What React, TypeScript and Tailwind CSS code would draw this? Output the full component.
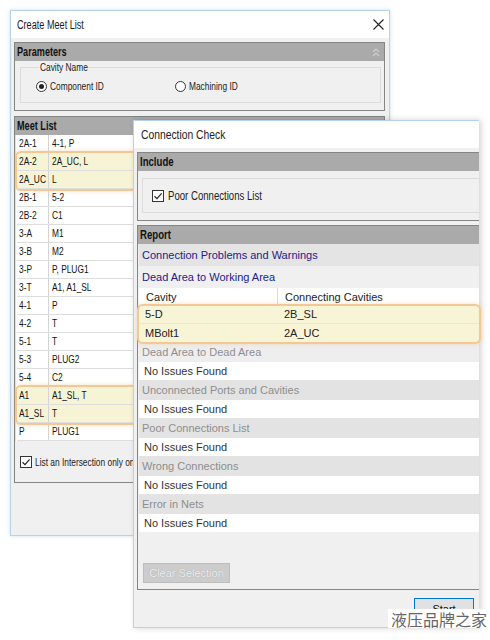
import React from 'react';

const sans = "font-['Liberation_Sans',Arial,sans-serif]";

// the screenshot is squeezed sideways; window 1 more than window 2
const Sq = ({ children, k = 'w1' }: { children: React.ReactNode; k?: 'w1' | 'w2' | 'hd' }) => (
    <span
        className={`inline-block origin-left whitespace-nowrap ${
            k === 'w1' ? 'scale-x-[0.76]' : k === 'w2' ? 'scale-x-[0.86]' : 'scale-x-[0.8]'
        }`}
    >
        {children}
    </span>
);

type MeetGroup = { hl: boolean; rows: [string, string][] };

const meetGroups: MeetGroup[] = [
    { hl: false, rows: [['2A-1', '4-1, P']] },
    { hl: true, rows: [['2A-2', '2A_UC, L'], ['2A_UC', 'L']] },
    {
        hl: false,
        rows: [
            ['2B-1', '5-2'], ['2B-2', 'C1'], ['3-A', 'M1'], ['3-B', 'M2'], ['3-P', 'P, PLUG1'],
            ['3-T', 'A1, A1_SL'], ['4-1', 'P'], ['4-2', 'T'], ['5-1', 'T'], ['5-3', 'PLUG2'], ['5-4', 'C2'],
        ],
    },
    { hl: true, rows: [['A1', 'A1_SL, T'], ['A1_SL', 'T']] },
    { hl: false, rows: [['P', 'PLUG1']] },
];

const sections = [
    { title: 'Dead Area to Dead Area', light: true },
    { title: 'Unconnected Ports and Cavities', light: false },
    { title: 'Poor Connections List', light: false },
    { title: 'Wrong Connections', light: false },
    { title: 'Error in Nets', light: false },
];

const Radio = ({ checked }: { checked?: boolean }) => (
    <span className="w-[11px] h-[11px] rounded-full border border-[#333] bg-white flex items-center justify-center shrink-0">
        {checked && <span className="w-[5px] h-[5px] rounded-full bg-[#222]" />}
    </span>
);

const Check = () => (
    <span className="w-[12px] h-[12px] border border-[#333] bg-white flex items-center justify-center shrink-0">
        <svg width="10" height="10" viewBox="0 0 10 10">
            <path d="M1.5 5.2 L4 7.6 L8.6 2.4" fill="none" stroke="#222" strokeWidth="1.2" />
        </svg>
    </span>
);

const PanelHeader = ({ title, k, collapse }: { title: string; k: 'w1' | 'hd'; collapse?: boolean }) => (
    <div className="h-[18px] bg-[#aaaaaa] flex items-center justify-between pl-[2px] pr-[4px]">
        <span className={`${sans} text-[12px] font-bold text-[#111]`}>
            <Sq k={k}>{title}</Sq>
        </span>
        {collapse && (
            <svg width="8" height="9" viewBox="0 0 8 9">
                <path d="M1 4 L4 1 L7 4 M1 8 L4 5 L7 8" fill="none" stroke="#cfcfcf" strokeWidth="1.2" />
            </svg>
        )}
    </div>
);

const CreateMeetList = () => (
    <div className="absolute z-[1] left-[10px] top-[10px] w-[380px] h-[526px] border border-[#b8d2ee] bg-[#f0f0f0] flex flex-col shadow-[0_0_4px_rgba(120,160,210,0.35)]">
        <div className="h-[27px] bg-white flex items-center justify-between pl-[6px] pr-[5px]">
            <span className={`${sans} text-[12px] text-[#1a1a1a]`}>
                <Sq>Create Meet List</Sq>
            </span>
            <svg width="11" height="11" viewBox="0 0 11 11">
                <path d="M0.5 0.5 L10.5 10.5 M10.5 0.5 L0.5 10.5" stroke="#222" strokeWidth="1.1" />
            </svg>
        </div>
        <div className="flex flex-col pl-[3px] pr-[4px] pt-[4px]">
            {/* Parameters */}
            <div className="h-[69px] border border-[#858585] flex flex-col">
                <PanelHeader title="Parameters" k="w1" collapse />
                <div className="pl-[5px] pr-[3px]">
                    <fieldset className="h-[42px] border border-[#dcdcdc] px-[15px]">
                        <legend className={`${sans} text-[11px] leading-[12px] text-[#222] ml-[3px] px-[1px] w-[38px] overflow-visible`}>
                            <Sq>Cavity Name</Sq>
                        </legend>
                        <div className={`${sans} text-[11px] text-[#222] flex items-center h-[14px] mt-[6px]`}>
                            <span className="w-[139px] flex items-center gap-[3px]">
                                <Radio checked /> <Sq>Component ID</Sq>
                            </span>
                            <span className="flex items-center gap-[3px]">
                                <Radio /> <Sq>Machining ID</Sq>
                            </span>
                        </div>
                    </fieldset>
                </div>
            </div>

            {/* Meet List */}
            <div className="mt-[5px] h-[367px] border border-[#858585] flex flex-col">
                <PanelHeader title="Meet List" k="w1" />
                <div className="pl-[1px] bg-white border-l border-[#e0e0e0]">
                    {meetGroups.map((g, gi) => (
                        <div
                            key={gi}
                            className={g.hl ? 'relative z-[1] rounded-[4px] bg-[#f6f4d4] ring-2 ring-[#f2c896] shadow-[0_0_4px_2px_rgba(240,190,130,0.5)]' : ''}
                        >
                            {g.rows.map(([a, b]) => (
                                <div key={a} className={`${sans} text-[11px] text-[#111] h-[18px] flex items-center border-b border-[#dedede]`}>
                                    <span className="w-[32px] h-full flex items-center pl-[2px] border-r border-[#d4d4d4]">
                                        <Sq>{a}</Sq>
                                    </span>
                                    <span className="pl-[3px]">
                                        <Sq>{b}</Sq>
                                    </span>
                                </div>
                            ))}
                        </div>
                    ))}
                </div>
                <div className={`${sans} text-[11px] text-[#222] flex items-center gap-[3px] pl-[5px] mt-[14px] h-[14px]`}>
                    <Check /> <Sq>List an Intersection only once</Sq>
                </div>
            </div>
        </div>
    </div>
);

const ConnectionCheck = () => (
    <div className="absolute z-[2] left-[133px] top-[120px] w-[346px] h-[508px] border-l border-t border-b border-[#b8d2ee] bg-[#f0f0f0] flex flex-col shadow-[2px_0_6px_rgba(0,0,0,0.18)]">
        <div className="h-[27px] bg-white flex items-center pl-[7px]">
            <span className={`${sans} text-[12px] text-[#222]`}>
                <Sq k="w2">Connection Check</Sq>
            </span>
        </div>
        <div className="flex flex-col pl-[3px] pt-[4px]">
            {/* Include */}
            <div className="h-[69px] border border-r-0 border-[#858585] flex flex-col">
                <PanelHeader title="Include" k="hd" />
                <div className="pl-[4px] pt-[7px]">
                    <div className="h-[35px] border border-r-0 border-[#dcdcdc] flex items-center pl-[9px] gap-[4px]">
                        <Check />
                        <span className={`${sans} text-[12px] text-[#222]`}>
                            <Sq k="hd">Poor Connections List</Sq>
                        </span>
                    </div>
                </div>
            </div>

            {/* Report */}
            <div className="mt-[4px] h-[365px] border border-r-0 border-[#858585] flex flex-col">
                <PanelHeader title="Report" k="hd" />
                <div className={`${sans} text-[11px] pl-[1px]`}>
                    <div className="h-[22px] bg-[#e4e4e4] flex items-center pl-[3px] text-[#22228a]">Connection Problems and Warnings</div>
                    <div className="h-[22px] bg-[#f0f0f0] flex items-center pl-[3px] text-[#22228a]">Dead Area to Working Area</div>
                    <div className="h-[18px] bg-white flex items-center text-[#222]">
                        <span className="w-[139px] h-full flex items-center pl-[7px] border-r border-[#dcdcdc]">Cavity</span>
                        <span className="pl-[7px]">Connecting Cavities</span>
                    </div>
                    <div className="relative z-[1] rounded-[4px] bg-[#f7f5d6] ring-2 ring-[#f2c896] shadow-[0_0_4px_2px_rgba(240,190,130,0.5)] text-[#222]">
                        <div className="h-[18px] flex items-center border-b border-[#eceacc]">
                            <span className="w-[139px] pl-[6px]">5-D</span>
                            <span className="pl-[6px]">2B_SL</span>
                        </div>
                        <div className="h-[18px] flex items-center">
                            <span className="w-[139px] pl-[6px]">MBolt1</span>
                            <span className="pl-[6px]">2A_UC</span>
                        </div>
                    </div>
                    {sections.map((s) => (
                        <div key={s.title}>
                            <div className={`h-[20px] flex items-center pl-[3px] text-[#8e8e8e] ${s.light ? 'bg-[#eeeeee]' : 'bg-[#e3e3e3]'}`}>{s.title}</div>
                            <div className="h-[18px] bg-white flex items-center pl-[5px] text-[#333]">No Issues Found</div>
                        </div>
                    ))}
                </div>
                <div className="mt-[31px] pl-[5px]">
                    <div className={`${sans} w-[87px] h-[20px] bg-[#cccccc] border border-[#bdbdbd] flex items-center justify-center text-[11px] text-[#eeeeee] [text-shadow:0_0_1px_#9a9a9a]`}>
                        Clear Selection
                    </div>
                </div>
            </div>

            <div className="flex justify-end pr-[5px] mt-[8px]">
                <div className={`${sans} w-[60px] h-[22px] bg-[#e1e1e1] border border-[#0078d7] flex justify-center pt-[2px] text-[11px] text-[#111]`}>
                    Start
                </div>
            </div>
        </div>
    </div>
);

export default function App() {
    return (
        <div className="relative w-[490px] h-[640px] bg-white overflow-hidden">
            <CreateMeetList />
            <ConnectionCheck />
            <div className="absolute z-[3] left-[388px] top-[609px] w-[102px] h-[19px] bg-white flex items-center justify-center">
                <span className="font-['Noto_Sans_CJK_SC',sans-serif] text-[16px] leading-none text-[#666]">液压品牌之家</span>
            </div>
        </div>
    );
}
